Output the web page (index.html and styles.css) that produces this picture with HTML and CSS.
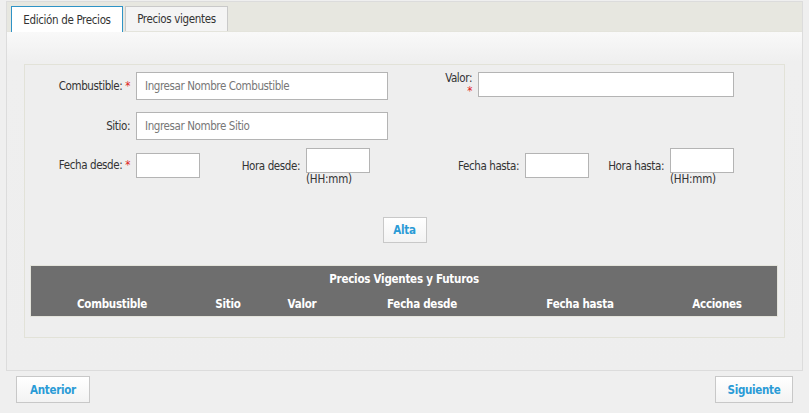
FILE: index.html
```html
<!DOCTYPE html>
<html lang="es">
<head>
<meta charset="utf-8">
<title>Edición de Precios</title>
<link rel="stylesheet" href="styles.css">
</head>
<body>
<div class="panel">
  <div class="tabbar">
    <div class="tab active">Edición de Precios</div>
    <div class="tab tab2">Precios vigentes</div>
  </div>
  <div class="content">
    <div class="fieldset">
      <div class="row row1">
        <div class="lbl lbl-a">Combustible: <span class="req">*</span></div>
        <input class="inp inp-wide" type="text" placeholder="Ingresar Nombre Combustible">
        <div class="lbl lbl-valor"><div>Valor:</div><div class="req">*</div></div>
        <input class="inp inp-valor" type="text">
      </div>
      <div class="row row2">
        <div class="lbl lbl-a">Sitio:</div>
        <input class="inp inp-wide" type="text" placeholder="Ingresar Nombre Sitio">
      </div>
      <div class="row row3">
        <div class="lbl lbl-a lbl-fd">Fecha desde: <span class="req">*</span></div>
        <input class="inp inp-small inp-fd" type="text">
        <div class="lbl lbl-hd">Hora desde:</div>
        <div class="timecell">
          <input class="inp inp-small" type="text">
          <div class="hint">(HH:mm)</div>
        </div>
        <div class="lbl lbl-fh">Fecha hasta:</div>
        <input class="inp inp-small inp-fd" type="text">
        <div class="lbl lbl-hh">Hora hasta:</div>
        <div class="timecell">
          <input class="inp inp-small" type="text">
          <div class="hint">(HH:mm)</div>
        </div>
      </div>
      <div class="actions">
        <button class="btn btn-alta">Alta</button>
      </div>
      <table class="grid">
        <colgroup>
          <col class="c1"><col class="c2"><col class="c3"><col class="c4"><col class="c5"><col class="c6">
        </colgroup>
        <thead>
          <tr><th colspan="6" class="title">Precios Vigentes y Futuros</th></tr>
          <tr>
            <th>Combustible</th>
            <th>Sitio</th>
            <th>Valor</th>
            <th>Fecha desde</th>
            <th>Fecha hasta</th>
            <th>Acciones</th>
          </tr>
        </thead>
      </table>
    </div>
  </div>
</div>
<div class="nav">
  <button class="btn btn-prev">Anterior</button>
  <button class="btn btn-next">Siguiente</button>
</div>
</body>
</html>
```
FILE: styles.css
```css
* { box-sizing: border-box; }
html, body { margin: 0; padding: 0; }
body {
  background: #efefef;
  font-family: "DejaVu Sans Condensed", "DejaVu Sans", sans-serif;
  font-size: 11.5px;
  letter-spacing: -0.3px;
  color: #333;
  width: 809px;
  height: 413px;
  overflow: hidden;
  padding: 1px 6px 0 6px;
}
.panel {
  border: 1px solid #dcdcdc;
  height: 370px;
  display: flex;
  flex-direction: column;
  background: #efefef;
}
.tabbar {
  background: #e7e7e0;
  height: 30px;
  display: flex;
  align-items: flex-end;
  padding-left: 4px;
  gap: 2px;
  border-bottom: 1px solid #e4e4dc;
  flex: none;
}
.tab {
  height: 25px;
  padding: 0;
  display: flex;
  align-items: center;
  justify-content: center;
  white-space: nowrap;
  border: 1px solid #c9c9c9;
  border-bottom: none;
  background: #f4f4f4;
  color: #333;
  font-size: 11.5px;
  letter-spacing: -0.35px;
}
.tab.active {
  background: #fff;
  border-color: #2f93c6;
  height: 26px;
  margin-bottom: -1px;
  width: 112px;
}
.tab2 { width: 103px; }
.content {
  flex: 1;
  background: linear-gradient(#f9f9f9 0px, #efefef 30px, #eeeeee 100%);
  padding: 32px 17px 0 17px;
}
.fieldset {
  border: 1px solid #e2e2d8;
  height: 274px;
  padding: 7px 0 0 0;
  background: #eeeeee;
}
.row { display: flex; align-items: flex-start; }
.lbl { text-align: right; color: #333; flex: none; letter-spacing: -0.4px; }
.req { color: #e02020; }
.lbl-a { width: 105px; margin-right: 6px; }
.inp {
  border: 1px solid #b4b4b4;
  background: #fff;
  font-family: inherit;
  font-size: 11.5px;
  letter-spacing: -0.4px;
  color: #333;
  padding: 0 8px;
  outline: none;
  margin: 0;
  flex: none;
}
.inp::placeholder { color: #777; }
.inp-wide { width: 252px; height: 28px; }
.row1 { height: 28px; }
.row1 .lbl-a, .row2 .lbl-a { margin-top: 7px; }
.lbl-valor { width: 29px; margin-left: 55px; margin-right: 6px; line-height: 13px; margin-top: 0; }
.inp-valor { width: 256px; height: 25px; }
.row2 { margin-top: 12px; }
.row3 { margin-top: 8px; height: 38px; }
.inp-small { width: 64px; height: 25px; }
.inp-fd { margin-top: 5px; }
.lbl-fd { margin-top: 10px; }
.lbl-hd { width: 100px; margin-right: 6px; margin-top: 11px; }
.lbl-fh { width: 149px; margin-right: 6px; margin-top: 11px; }
.lbl-hh { width: 75px; margin-right: 6px; margin-top: 11px; }
.timecell { display: flex; flex-direction: column; }
.hint { font-size: 11.5px; line-height: 13px; color: #333; letter-spacing: -0.2px; }
.actions { display: flex; justify-content: center; margin-top: 31px; }
.btn {
  font-family: inherit;
  font-size: 11.5px;
  font-weight: bold;
  letter-spacing: -0.3px;
  color: #2a9bd6;
  background: linear-gradient(#ffffff, #f3f3f3);
  border: 1px solid #c8c8c8;
  height: 26px;
  padding: 0;
  cursor: pointer;
}
.btn-alta { width: 44px; height: 26px; }
.grid {
  margin: 23px 0 0 6px;
  width: 746px;
  border-collapse: collapse;
  background: #6e6e6e;
  color: #fff;
  table-layout: fixed;
  outline: 1px solid #e4e4dc;
}
.grid th {
  font-weight: bold;
  font-size: 11.5px;
  letter-spacing: -0.25px;
  height: 25px;
  padding: 0;
  text-align: center;
}
.grid th.title { height: 25px; padding-top: 1px; }
.c1 { width: 162px; }
.c2 { width: 70px; }
.c3 { width: 78px; }
.c4 { width: 162px; }
.c5 { width: 154px; }
.c6 { width: 120px; }
.nav {
  display: flex;
  justify-content: space-between;
  padding: 5px 10px 0 10px;
}
.btn-prev { width: 74px; height: 27px; }
.btn-next { width: 78px; height: 27px; }
```
